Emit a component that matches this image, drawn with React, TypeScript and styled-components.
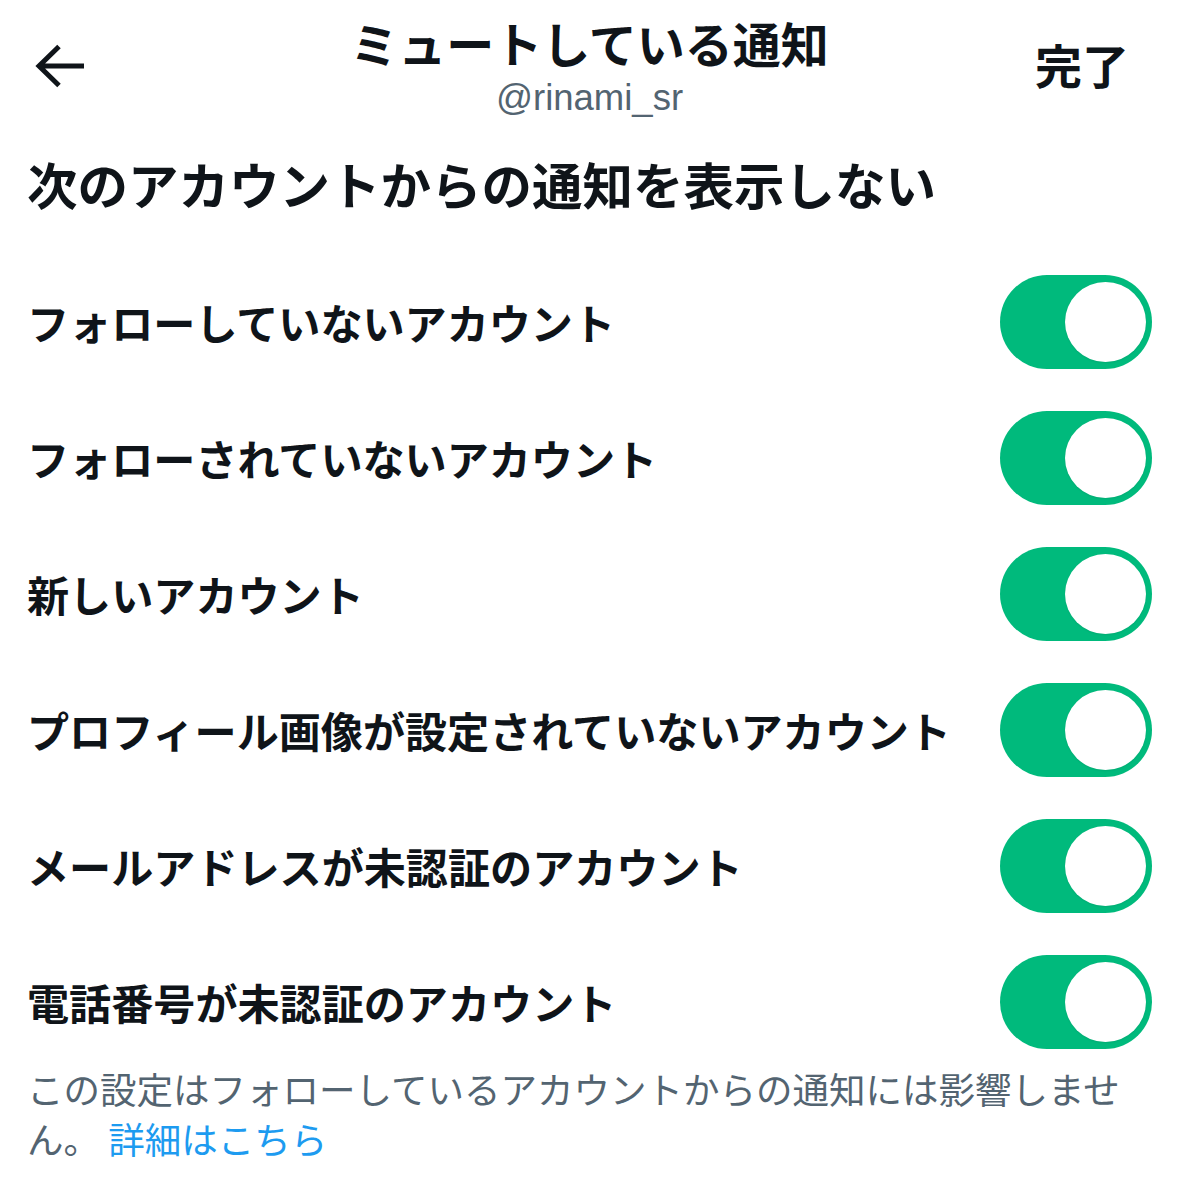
import React from "react";
import styled, { createGlobalStyle } from "styled-components";

const GlobalStyle = createGlobalStyle`
  html, body {
    margin: 0;
    padding: 0;
    background: #ffffff;
  }
  body {
    font-family: "Noto Sans CJK JP", "Noto Sans", sans-serif;
    color: #0f1419;
  }
`;

const Page = styled.div`
  width: 1179px;
  min-height: 1188px;
  background: #ffffff;
  display: flex;
  flex-direction: column;
`;

const Header = styled.header`
  display: grid;
  grid-template-columns: 1fr auto 1fr;
  align-items: start;
  padding-top: 14px;
`;

const BackButton = styled.button`
  justify-self: start;
  margin: 30px 0 0 35px;
  padding: 0;
  border: none;
  background: none;
  width: 50px;
  height: 44px;
  display: flex;
  align-items: center;
  color: #0f1419;
  cursor: pointer;
`;

const TitleBlock = styled.div`
  display: flex;
  flex-direction: column;
  align-items: center;
`;

const Title = styled.h1`
  margin: 0;
  font-size: 48px;
  line-height: 56px;
  font-weight: 700;
  color: #0f1419;
`;

const Handle = styled.div`
  margin-top: 8px;
  font-family: "Liberation Sans", Arial, sans-serif;
  font-size: 36.5px;
  line-height: 40px;
  color: #536471;
`;

const DoneButton = styled.button`
  justify-self: end;
  margin: 22px 50px 0 0;
  padding: 0;
  border: none;
  background: none;
  font-family: "Noto Sans CJK JP", sans-serif;
  font-size: 47px;
  line-height: 56px;
  font-weight: 700;
  color: #0f1419;
`;

const SectionTitle = styled.h2`
  margin: 35px 0 0 0;
  padding: 0 27px;
  font-size: 50.5px;
  line-height: 60px;
  font-weight: 700;
  color: #0f1419;
`;

const List = styled.div`
  display: flex;
  flex-direction: column;
  gap: 42px;
  margin-top: 62px;
`;

const Row = styled.div`
  display: flex;
  align-items: center;
  justify-content: space-between;
  height: 94px;
  padding: 0 27px 0 27px;
`;

const Label = styled.span`
  font-size: 42.1px;
  line-height: 50px;
  font-weight: 700;
  color: #0f1419;
  white-space: nowrap;
`;

const Track = styled.div<{ $on: boolean }>`
  position: relative;
  flex: none;
  width: 152px;
  height: 94px;
  border-radius: 47px;
  background: ${(p) => (p.$on ? "#00ba7c" : "#e9e9eb")};
`;

const Knob = styled.div<{ $on: boolean }>`
  position: absolute;
  top: 7px;
  ${(p) => (p.$on ? "right: 6px;" : "left: 6px;")}
  width: 81px;
  height: 80px;
  border-radius: 50%;
  background: #ffffff;
  box-shadow: 0 1px 2px rgba(0, 0, 0, 0.08);
`;

const Footer = styled.p`
  margin: 15px 0 0 0;
  padding: 0 10px 0 27px;
  font-size: 36.5px;
  line-height: 50px;
  font-weight: 400;
  color: #536471;
`;

const Link = styled.a`
  color: #1d9bf0;
  text-decoration: none;
`;

const items = [
  "フォローしていないアカウント",
  "フォローされていないアカウント",
  "新しいアカウント",
  "プロフィール画像が設定されていないアカウント",
  "メールアドレスが未認証のアカウント",
  "電話番号が未認証のアカウント",
];

const Toggle: React.FC<{ on: boolean }> = ({ on }) => (
  <Track $on={on}>
    <Knob $on={on} />
  </Track>
);

export default function App() {
  return (
    <>
      <GlobalStyle />
      <Page>
        <Header>
          <BackButton aria-label="戻る">
            <svg width="50" height="44" viewBox="0 0 50 44" fill="none">
              <path
                d="M49 22H4M24 2.5L4 22l20 19.5"
                stroke="#0f1419"
                strokeWidth="5"
                strokeLinecap="butt"
                strokeLinejoin="miter"
              />
            </svg>
          </BackButton>
          <TitleBlock>
            <Title>ミュートしている通知</Title>
            <Handle>@rinami_sr</Handle>
          </TitleBlock>
          <DoneButton>完了</DoneButton>
        </Header>
        <SectionTitle>次のアカウントからの通知を表示しない</SectionTitle>
        <List>
          {items.map((t) => (
            <Row key={t}>
              <Label>{t}</Label>
              <Toggle on />
            </Row>
          ))}
        </List>
        <Footer>
          この設定はフォローしているアカウントからの通知には影響しません。 <Link href="#">詳細はこちら</Link>
        </Footer>
      </Page>
    </>
  );
}
